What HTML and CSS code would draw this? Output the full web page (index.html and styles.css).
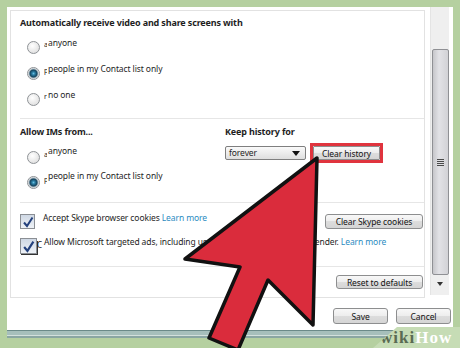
FILE: index.html
```html
<!DOCTYPE html>
<html lang="en">
<head>
    <meta charset="UTF-8">
    <title>Privacy settings</title>
    <link rel="stylesheet" href="styles.css">
</head>
<body>

<div class="window">
    <div class="main">
        <div class="panel">
            <div class="group g-video">
                <div class="title">Automatically receive video and share screens with</div>
                <div class="rows">
                    <div class="radio-row"><span class="radio"></span><span class="key">a</span><span class="label">anyone</span></div>
                    <div class="radio-row"><span class="radio on"></span><span class="key">p</span><span class="label">people in my Contact list only</span></div>
                    <div class="radio-row"><span class="radio"></span><span class="key">r</span><span class="label">no one</span></div>
                </div>
            </div>

            <div class="group g-ims">
                <div class="col col-left">
                    <div class="title">Allow IMs from...</div>
                    <div class="rows">
                        <div class="radio-row"><span class="radio"></span><span class="key">a</span><span class="label">anyone</span></div>
                        <div class="radio-row"><span class="radio on"></span><span class="key">p</span><span class="label">people in my Contact list only</span></div>
                    </div>
                </div>
                <div class="col col-right">
                    <div class="title">Keep history for</div>
                    <div class="history-row">
                        <div class="select">forever<span class="caret"></span></div>
                        <div class="highlight"><button class="btn btn-history">Clear history</button></div>
                    </div>
                </div>
            </div>

            <div class="group g-cookies">
                <div class="check-row">
                    <span class="check"><svg width="12" height="12" viewBox="0 0 12 12"><path d="M2 6.5 L5 10 L10.5 1.5" fill="none" stroke="#24417d" stroke-width="2"/></svg></span>
                    <span class="label">Accept Skype browser cookies <a class="link">Learn more</a></span>
                    <button class="btn btn-cookies">Clear Skype cookies</button>
                </div>
                <div class="check-row">
                    <span class="check check-big"><svg width="13" height="13" viewBox="0 0 12 12"><path d="M2 6.5 L5 10 L10.5 1.5" fill="none" stroke="#24417d" stroke-width="2"/></svg></span>
                    <span class="ghost">C</span>
                    <span class="label">Allow Microsoft targeted ads, including use of Skype profile age and gender. <a class="link">Learn more</a></span>
                </div>
            </div>

            <div class="group g-reset">
                <button class="btn btn-reset">Reset to defaults</button>
            </div>
        </div>

        <div class="scrollbar">
            <div class="thumb"><span class="grip"></span></div>
            <div class="arrow-down"></div>
        </div>
    </div>

    <div class="footer">
        <button class="btn btn-footer">Save</button>
        <button class="btn btn-footer">Cancel</button>
    </div>
</div>
<div class="strip"></div>

<div class="logo"><span class="wiki">wiki</span><span class="how">How</span></div>

<svg class="pointer" width="460" height="348" viewBox="0 0 460 348">
    <path d="M317 158 L313 325 L268 280 L238 350 L209 338 L240 267 L185 259 Z" fill="#da2c3c" stroke="#111" stroke-width="3.5" stroke-linejoin="round"/>
</svg>

</body>
</html>
```

FILE: styles.css
```css
* {
    box-sizing: border-box;
}
body {
    margin: 0;
    width: 460px;
    height: 348px;
    overflow: hidden;
    position: relative;
    background-color: #b5d0a0;
    font-family: "Noto Sans", sans-serif;
    font-size: 8.5px;
    letter-spacing: -0.1px;
    color: #1e1e1e;
}
.window {
    margin: 7px 7px 0;
    height: 323px;
    background-color: #fff;
}
.main {
    display: flex;
    align-items: flex-start;
}
.panel {
    margin: 3px 0 0 3px;
    width: 415px;
    height: 288px;
    border: 1px solid #e2e2e2;
}
.group {
    margin-left: 9px;
    padding-right: 1px;
    border-bottom: 1px solid #e6e6e6;
}
.title {
    font-weight: bold;
    font-size: 9px;
    letter-spacing: -0.15px;
    line-height: 12px;
}
.g-video {
    height: 108px;
    padding-top: 6px;
}
.g-video .rows {
    margin-top: 5px;
}
.radio-row {
    display: flex;
    align-items: flex-start;
    height: 26px;
}
.radio {
    width: 13px;
    height: 13px;
    margin: 7px 4px 0 7px;
    border: 1px solid #8e9296;
    border-radius: 50%;
    background: radial-gradient(circle at 40% 35%, #ffffff, #d8d8d8);
}
.radio.on {
    background: radial-gradient(circle at 50% 50%, #6cc0e0 0, #2b7fa6 1.5px, #14445e 3.5px, #9fb0ba 4.5px, #f2f2f2 5.5px);
}
.key {
    width: 3px;
    overflow: hidden;
    font-size: 7px;
    line-height: 8px;
    margin-top: 7px;
}
.label {
    margin-top: 3px;
    margin-left: 1px;
    line-height: 12px;
    white-space: nowrap;
}
.g-ims {
    height: 84px;
    padding-top: 7px;
    display: flex;
}
.col-left {
    width: 205px;
}
.g-ims .rows {
    margin-top: 6px;
}
.g-ims .radio-row {
    height: 25px;
}
.g-ims .label {
    margin-top: 1px;
}
.history-row {
    display: flex;
    align-items: center;
    gap: 4px;
    margin-top: 5px;
}
.select {
    position: relative;
    width: 81px;
    height: 14px;
    padding-left: 3px;
    line-height: 12px;
    border: 1px solid #7f7f7f;
    border-radius: 2px;
    background: linear-gradient(#fafafa, #ececec 50%, #dedede);
}
.caret {
    position: absolute;
    right: 5px;
    top: 4px;
    border-left: 4px solid transparent;
    border-right: 4px solid transparent;
    border-top: 5px solid #111;
}
.highlight {
    border: 3px solid #e0343e;
}
.btn {
    padding: 0;
    font-family: inherit;
    font-size: 8.5px;
    letter-spacing: -0.1px;
    line-height: 11px;
    color: #141414;
    border: 1px solid #8d8e8f;
    border-radius: 3px;
    background: linear-gradient(#f8f8f8, #ededed 50%, #dddddd 50%, #d5d5d5);
}
.btn-history {
    display: block;
    width: 67px;
    height: 14px;
    border-radius: 1px;
}
.g-cookies {
    height: 64px;
    padding-top: 11px;
}
.check-row {
    display: flex;
    align-items: flex-start;
    height: 24px;
}
.check {
    width: 15px;
    height: 15px;
    margin-right: 7px;
    border: 1px solid #8b8f94;
    background: linear-gradient(#cfd8e4, #eef2f7);
    display: flex;
    align-items: center;
    justify-content: center;
}
.check-big {
    width: 17px;
    height: 16px;
    margin-right: 0;
    box-shadow: 0 2px 0 -1px #333, 2px 2px 0 -1px #333;
}
.ghost {
    font-size: 8px;
    line-height: 14px;
    margin-right: 1px;
}
.check-row .label {
    margin-top: -2px;
}
.link {
    color: #2b8bbf;
}
.btn-cookies {
    margin-left: auto;
    width: 98px;
    height: 15px;
}
.g-reset {
    height: 30px;
    padding-top: 8px;
    border-bottom: none;
    display: flex;
    justify-content: flex-end;
}
.btn-reset {
    width: 87px;
    height: 14px;
}
.scrollbar {
    margin-left: 5px;
    width: 19px;
    height: 288px;
    padding-top: 42px;
    background-color: #efefef;
    border-left: 1px solid #e4e4e4;
    display: flex;
    flex-direction: column;
    align-items: center;
}
.thumb {
    width: 17px;
    height: 226px;
    border: 1px solid #8f9094;
    border-radius: 2px;
    background: linear-gradient(to right, #c6c6ca, #e2e2e6 40%, #d2d2d6);
    display: flex;
    align-items: center;
    justify-content: center;
}
.grip {
    width: 7px;
    height: 7px;
    background: repeating-linear-gradient(#4a4a4a 0 1px, transparent 1px 2px);
}
.arrow-down {
    margin-top: 7px;
    border-left: 3.5px solid transparent;
    border-right: 3.5px solid transparent;
    border-top: 4px solid #333;
}
.footer {
    display: flex;
    justify-content: flex-end;
    gap: 8px;
    padding: 10px 2px 0 0;
}
.btn-footer {
    width: 55px;
    height: 16px;
}
.strip {
    margin-left: 7px;
    height: 10px;
    background: linear-gradient(#6b8a88 0 1px, #a6bfbb 1px 5px, #d3e0dc 5px 6px, #8aa6a2 6px 8px, #b5d0a0 8px);
}
.logo {
    position: absolute;
    right: 0;
    bottom: 0;
    width: 87px;
    height: 21px;
    padding: 1px 0 0 7px;
    background-color: #c6dcb5;
    clip-path: polygon(24px 0, 100% 0, 100% 100%, 0 100%);
    font-family: "Liberation Serif", serif;
    font-weight: bold;
    font-size: 17px;
    line-height: 20px;
    letter-spacing: 1px;
}
.wiki {
    color: #5a6b53;
}
.how {
    color: #fff;
}
.pointer {
    position: absolute;
    top: 0;
    left: 0;
}
```
